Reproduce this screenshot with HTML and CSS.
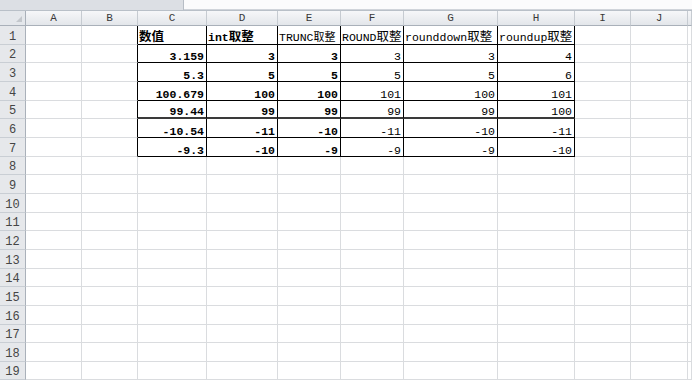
FILE: index.html
```html
<!DOCTYPE html>
<html lang="zh-CN">
<head>
  <meta charset="UTF-8" />
  <title>取整函数对比</title>
  <link rel="stylesheet" href="styles.css">
</head>
<body>
  <div class="topbar">
    <div class="namebox"></div>
    <div class="formula"></div>
  </div>

  <table class="sheet">
    <colgroup>
      <col class="w-rh"><col class="w-a"><col class="w-b"><col class="w-c"><col class="w-d"><col class="w-e">
      <col class="w-f"><col class="w-g"><col class="w-h"><col class="w-i"><col class="w-j"><col class="w-k">
    </colgroup>
    <thead>
      <tr>
        <th class="corner"><span class="tri"></span></th>
        <th>A</th><th>B</th><th>C</th><th>D</th><th>E</th><th>F</th><th>G</th><th>H</th><th>I</th><th>J</th><th></th>
      </tr>
    </thead>
    <tbody>
      <tr>
        <th>1</th><td></td><td class="edge"></td>
        <td class="box b"><span class="zh">数值</span></td>
        <td class="box b">int<span class="zh">取整</span></td>
        <td class="box">TRUNC<span class="zh sm">取整</span></td>
        <td class="box">ROUND<span class="zh">取整</span></td>
        <td class="box">rounddown<span class="zh">取整</span></td>
        <td class="box">roundup<span class="zh">取整</span></td>
        <td></td><td></td><td></td>
      </tr>
      <tr>
        <th>2</th><td></td><td class="edge"></td>
        <td class="box num b">3.159</td><td class="box num b">3</td><td class="box num b">3</td>
        <td class="box num">3</td><td class="box num">3</td><td class="box num">4</td>
        <td></td><td></td><td></td>
      </tr>
      <tr>
        <th>3</th><td></td><td class="edge"></td>
        <td class="box num b">5.3</td><td class="box num b">5</td><td class="box num b">5</td>
        <td class="box num">5</td><td class="box num">5</td><td class="box num">6</td>
        <td></td><td></td><td></td>
      </tr>
      <tr>
        <th>4</th><td></td><td class="edge"></td>
        <td class="box num b">100.679</td><td class="box num b">100</td><td class="box num b">100</td>
        <td class="box num">101</td><td class="box num">100</td><td class="box num">101</td>
        <td></td><td></td><td></td>
      </tr>
      <tr class="heavy">
        <th>5</th><td></td><td class="edge"></td>
        <td class="box num b">99.44</td><td class="box num b">99</td><td class="box num b">99</td>
        <td class="box num">99</td><td class="box num">99</td><td class="box num">100</td>
        <td></td><td></td><td></td>
      </tr>
      <tr>
        <th>6</th><td></td><td class="edge"></td>
        <td class="box num b">-10.54</td><td class="box num b">-11</td><td class="box num b">-10</td>
        <td class="box num">-11</td><td class="box num">-10</td><td class="box num">-11</td>
        <td></td><td></td><td></td>
      </tr>
      <tr>
        <th>7</th><td></td><td class="edge"></td>
        <td class="box num b">-9.3</td><td class="box num b">-10</td><td class="box num b">-9</td>
        <td class="box num">-9</td><td class="box num">-9</td><td class="box num">-10</td>
        <td></td><td></td><td></td>
      </tr>
      <tr><th>8</th><td></td><td></td><td></td><td></td><td></td><td></td><td></td><td></td><td></td><td></td><td></td></tr>
      <tr><th>9</th><td></td><td></td><td></td><td></td><td></td><td></td><td></td><td></td><td></td><td></td><td></td></tr>
      <tr><th>10</th><td></td><td></td><td></td><td></td><td></td><td></td><td></td><td></td><td></td><td></td><td></td></tr>
      <tr><th>11</th><td></td><td></td><td></td><td></td><td></td><td></td><td></td><td></td><td></td><td></td><td></td></tr>
      <tr><th>12</th><td></td><td></td><td></td><td></td><td></td><td></td><td></td><td></td><td></td><td></td><td></td></tr>
      <tr><th>13</th><td></td><td></td><td></td><td></td><td></td><td></td><td></td><td></td><td></td><td></td><td></td></tr>
      <tr><th>14</th><td></td><td></td><td></td><td></td><td></td><td></td><td></td><td></td><td></td><td></td><td></td></tr>
      <tr><th>15</th><td></td><td></td><td></td><td></td><td></td><td></td><td></td><td></td><td></td><td></td><td></td></tr>
      <tr><th>16</th><td></td><td></td><td></td><td></td><td></td><td></td><td></td><td></td><td></td><td></td><td></td></tr>
      <tr><th>17</th><td></td><td></td><td></td><td></td><td></td><td></td><td></td><td></td><td></td><td></td><td></td></tr>
      <tr><th>18</th><td></td><td></td><td></td><td></td><td></td><td></td><td></td><td></td><td></td><td></td><td></td></tr>
      <tr><th>19</th><td></td><td></td><td></td><td></td><td></td><td></td><td></td><td></td><td></td><td></td><td></td></tr>
    </tbody>
  </table>
</body>
</html>
```

FILE: styles.css
```css
body {
  margin: 0;
  background: #fff;
  overflow: hidden;
  font-family: "Liberation Mono", "Noto Sans CJK SC", monospace;
  font-size: 11.5px;
  color: #000;
}

/* formula bar strip */
.topbar {
  display: flex;
  height: 10px;
  border-bottom: 1px solid #b9c0c8;
}

.namebox {
  width: 183px;
  background: #dcdfe4;
  border-right: 1px solid #b7bdc5;
}

.formula {
  flex: 1;
  background: #fbfbfc;
  border-bottom: 1px solid #d0d4da;
}

/* grid */
.sheet {
  table-layout: fixed;
  border-collapse: separate;
  border-spacing: 0;
  width: 692px;
}

.w-rh { width: 26px; }
.w-a { width: 56px; }
.w-b { width: 56px; }
.w-c { width: 69px; }
.w-d { width: 71px; }
.w-e { width: 63px; }
.w-f { width: 63px; }
.w-g { width: 94px; }
.w-h { width: 77px; }
.w-i { width: 56px; }
.w-j { width: 57px; }
.w-k { width: 4px; }

.sheet td,
.sheet th {
  box-sizing: border-box;
  padding: 0;
  overflow: hidden;
  white-space: nowrap;
}

.sheet thead th {
  height: 15px;
  line-height: 13px;
  font-weight: normal;
  font-size: 11px;
  color: #3a3a3a;
  text-align: center;
  vertical-align: middle;
  background: linear-gradient(#f6f7f9, #e3e6ea);
  border-right: 1px solid #c6cbd1;
  border-bottom: 1px solid #a9b0b9;
}

.sheet thead .corner {
  position: relative;
  background: #e4e7eb;
  border-right: 1px solid #a9b0b9;
}

.tri {
  position: absolute;
  right: 3px;
  bottom: 3px;
  width: 0;
  height: 0;
  border-left: 6px solid transparent;
  border-bottom: 6px solid #c3c7cc;
}

.sheet tbody th {
  height: 18.67px;
  font-weight: normal;
  font-size: 12px;
  color: #454545;
  text-align: center;
  vertical-align: bottom;
  line-height: 12px;
  padding-bottom: 1px;
  background: #e6e8eb;
  border-right: 1px solid #aab1ba;
  border-bottom: 1px solid #c9ced4;
}

.sheet td {
  height: 18.67px;
  line-height: 11px;
  vertical-align: bottom;
  padding: 0 2px 0 3px;
  border-right: 1px solid #dadcdf;
  border-bottom: 1px solid #dadcdf;
}

.sheet td.edge {
  border-right-color: #000;
}

.sheet td.box {
  border-right-color: #000;
  border-bottom-color: #000;
  padding-left: 1px;
}

.heavy td.box {
  border-bottom: 2px solid #3a3a3a;
}

.num {
  text-align: right;
}

.b {
  font-weight: bold;
}

.zh {
  font-size: 12.5px;
}

.zh.sm {
  font-size: 11px;
}
```
